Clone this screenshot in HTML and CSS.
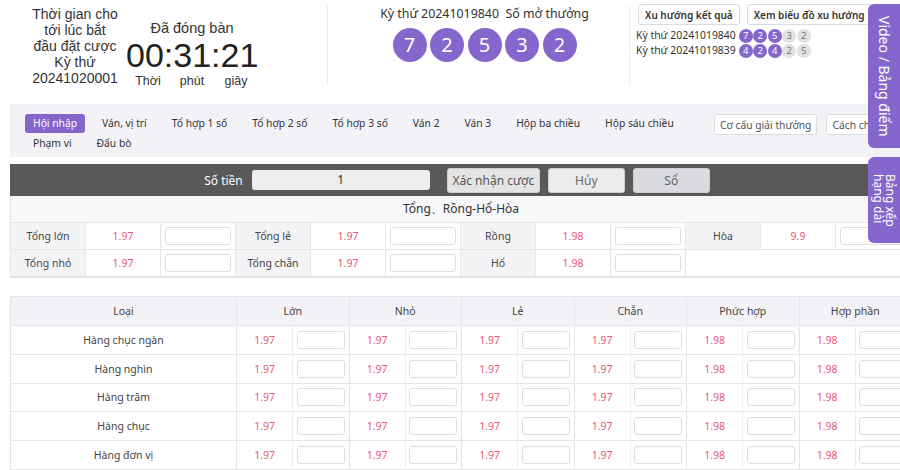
FILE: index.html
```html
<!DOCTYPE html>
<html lang="vi">
<head>
<meta charset="utf-8">
<title>Bet</title>
<link rel="stylesheet" href="styles.css">
</head>
<body>
<div class="page">
  <header class="hdr">
    <div class="hdr-left">
      <div class="countdown-label">Thời gian cho<br>tới lúc bắt<br>đầu đặt cược<br>Kỳ thứ<br>20241020001</div>
      <div class="clock">
        <div class="clock-status">Đã đóng bàn</div>
        <div class="clock-time">00:31:21</div>
        <div class="clock-units"><span>Thời</span><span>phút</span><span>giây</span></div>
      </div>
    </div>
    <div class="hdr-mid">
      <div class="draw-title">Kỳ thứ 20241019840&nbsp; Số mở thưởng</div>
      <div class="balls">
        <span class="ball">7</span><span class="ball">2</span><span class="ball">5</span><span class="ball">3</span><span class="ball">2</span>
      </div>
    </div>
    <div class="hdr-right">
      <div class="trend-btns">
        <button class="trend-btn">Xu hướng kết quả</button>
        <button class="trend-btn">Xem biểu đồ xu hướng</button>
      </div>
      <div class="hist-row">Kỳ thứ 20241019840
        <span class="mini on">7</span><span class="mini on">2</span><span class="mini on">5</span><span class="mini">3</span><span class="mini">2</span>
      </div>
      <div class="hist-row">Kỳ thứ 20241019839
        <span class="mini on">4</span><span class="mini on">2</span><span class="mini on">4</span><span class="mini">2</span><span class="mini">5</span>
      </div>
    </div>
  </header>

  <nav class="nav">
    <div class="tabs">
      <span class="tab active">Hội nhập</span>
      <span class="tab">Ván, vị trí</span>
      <span class="tab">Tổ hợp 1 số</span>
      <span class="tab">Tổ hợp 2 số</span>
      <span class="tab">Tổ hợp 3 số</span>
      <span class="tab">Ván 2</span>
      <span class="tab">Ván 3</span>
      <span class="tab">Hộp ba chiều</span>
      <span class="tab">Hộp sáu chiều</span>
      <span class="tab">Phạm vi</span>
      <span class="tab">Đấu bò</span>
    </div>
    <button class="nav-btn">Cơ cấu giải thưởng</button>
    <button class="nav-btn">Cách chơi</button>
  </nav>

  <div class="betbar">
    <span class="bet-label">Số tiền</span>
    <span class="bet-input">1</span>
    <button class="bar-btn confirm">Xác nhận cược</button>
    <button class="bar-btn">Hủy</button>
    <button class="bar-btn book">Sổ</button>
  </div>

  <section class="sec1">
    <div class="sec-title">Tổng、Rồng-Hổ-Hòa</div>
    <div class="grid12">
      <div class="lbl">Tổng lớn</div><div class="odd">1.97</div><div class="inp"><i></i></div>
      <div class="lbl">Tổng lẻ</div><div class="odd">1.97</div><div class="inp"><i></i></div>
      <div class="lbl">Rồng</div><div class="odd">1.98</div><div class="inp"><i></i></div>
      <div class="lbl">Hòa</div><div class="odd">9.9</div><div class="inp"><i></i></div>
      <div class="lbl">Tổng nhỏ</div><div class="odd">1.97</div><div class="inp"><i></i></div>
      <div class="lbl">Tổng chẵn</div><div class="odd">1.97</div><div class="inp"><i></i></div>
      <div class="lbl">Hổ</div><div class="odd">1.98</div><div class="inp"><i></i></div>
      <div class="blank"></div>
    </div>
  </section>

  <section class="sec2">
    <div class="grid13">
      <div class="th">Loại</div><div class="th span2">Lớn</div><div class="th span2">Nhỏ</div><div class="th span2">Lẻ</div><div class="th span2">Chẵn</div><div class="th span2">Phức hợp</div><div class="th span2">Hợp phần</div>

      <div class="rl">Hàng chục ngàn</div>
      <div class="odd">1.97</div><div class="inp"><i></i></div><div class="odd">1.97</div><div class="inp"><i></i></div><div class="odd">1.97</div><div class="inp"><i></i></div><div class="odd">1.97</div><div class="inp"><i></i></div><div class="odd">1.98</div><div class="inp"><i></i></div><div class="odd">1.98</div><div class="inp"><i></i></div>

      <div class="rl">Hàng nghìn</div>
      <div class="odd">1.97</div><div class="inp"><i></i></div><div class="odd">1.97</div><div class="inp"><i></i></div><div class="odd">1.97</div><div class="inp"><i></i></div><div class="odd">1.97</div><div class="inp"><i></i></div><div class="odd">1.98</div><div class="inp"><i></i></div><div class="odd">1.98</div><div class="inp"><i></i></div>

      <div class="rl">Hàng trăm</div>
      <div class="odd">1.97</div><div class="inp"><i></i></div><div class="odd">1.97</div><div class="inp"><i></i></div><div class="odd">1.97</div><div class="inp"><i></i></div><div class="odd">1.97</div><div class="inp"><i></i></div><div class="odd">1.98</div><div class="inp"><i></i></div><div class="odd">1.98</div><div class="inp"><i></i></div>

      <div class="rl">Hàng chục</div>
      <div class="odd">1.97</div><div class="inp"><i></i></div><div class="odd">1.97</div><div class="inp"><i></i></div><div class="odd">1.97</div><div class="inp"><i></i></div><div class="odd">1.97</div><div class="inp"><i></i></div><div class="odd">1.98</div><div class="inp"><i></i></div><div class="odd">1.98</div><div class="inp"><i></i></div>

      <div class="rl">Hàng đơn vị</div>
      <div class="odd">1.97</div><div class="inp"><i></i></div><div class="odd">1.97</div><div class="inp"><i></i></div><div class="odd">1.97</div><div class="inp"><i></i></div><div class="odd">1.97</div><div class="inp"><i></i></div><div class="odd">1.98</div><div class="inp"><i></i></div><div class="odd">1.98</div><div class="inp"><i></i></div>
    </div>
  </section>
</div>

<div class="side-tab video">Video / Bảng điểm</div>
<div class="side-tab rank">Bảng xếp hạng dài</div>
</body>
</html>
```

FILE: styles.css
```css
html, body {
  margin: 0;
  padding: 0;
  overflow: hidden;
  background: #fff;
}
body {
  font-family: "Noto Sans", "Open Sans", sans-serif;
  color: #333;
  width: 900px;
  height: 470px;
}
button {
  font-family: inherit;
  cursor: pointer;
}
.page {
  margin-left: 10px;
  width: 902px;
}

/* header */
.hdr {
  display: flex;
  height: 104px;
  margin-left: -10px;
}
.hdr-left {
  width: 327px;
  display: flex;
  flex: none;
}
.countdown-label {
  margin-left: 28px;
  width: 94px;
  padding-top: 6px;
  text-align: center;
  font-family: "Liberation Sans", Arial, sans-serif;
  font-size: 14px;
  line-height: 16px;
  color: #333;
}
.clock {
  margin-left: 4px;
  width: 132px;
  text-align: center;
  padding-top: 20px;
  font-family: "Liberation Sans", Arial, sans-serif;
}
.clock-status {
  font-size: 14.5px;
  line-height: 16px;
}
.clock-time {
  font-size: 34px;
  line-height: 38px;
  color: #222;
}
.clock-units {
  display: grid;
  grid-template-columns: repeat(3, 1fr);
  font-size: 12.5px;
  line-height: 14px;
  margin-top: 0;
}
.hdr-mid {
  width: 289px;
  flex: none;
  border-left: 1px solid #ececec;
  height: 80px;
  margin-top: 5px;
  padding-left: 12px;
  display: flex;
  flex-direction: column;
  align-items: center;
}
.draw-title {
  font-size: 12.4px;
  line-height: 16px;
  margin-top: 1px;
  color: #333;
}
.balls {
  display: flex;
  gap: 3.5px;
  margin-top: 6px;
}
.ball {
  width: 34px;
  height: 34px;
  border-radius: 50%;
  background: #8466cc;
  color: #fff;
  font-size: 20px;
  line-height: 34px;
  text-align: center;
}
.hdr-right {
  flex: 1;
  border-left: 1px solid #ececec;
  height: 80px;
  margin-top: 5px;
  padding-left: 6px;
}
.trend-btns {
  display: flex;
  gap: 7px;
  margin-top: -1px;
  margin-left: 2px;
}
.trend-btn {
  height: 21px;
  padding: 0 6px;
  border: 1px solid #dcdcdc;
  border-radius: 3px;
  background: #fff;
  color: #333;
  font-size: 10px;
  font-weight: 600;
  white-space: nowrap;
}
.hist-row {
  font-size: 10.4px;
  line-height: 15px;
  display: flex;
  align-items: center;
  white-space: nowrap;
  color: #333;
}
.trend-btns + .hist-row {
  margin-top: 3px;
}
.hist-row .mini:first-of-type {
  margin-left: 3px;
}
.mini {
  width: 14px;
  height: 14px;
  border-radius: 50%;
  background: #e2e2e2;
  color: #777;
  font-size: 9.5px;
  line-height: 14px;
  text-align: center;
  margin-right: 0.5px;
}
.mini.on {
  background: #8466cc;
  color: #fff;
}

/* nav */
.nav {
  display: flex;
  align-items: flex-start;
  background: #f3f2f7;
  height: 53px;
  box-sizing: border-box;
  padding: 10px 0 0 15px;
}
.tabs {
  width: 680px;
  flex: none;
  display: flex;
  flex-wrap: wrap;
  column-gap: 9px;
  row-gap: 1px;
}
.tab {
  font-size: 10.3px;
  line-height: 19px;
  padding: 0 8px;
  border-radius: 3px;
  color: #333;
  white-space: nowrap;
}
.tab.active {
  background: #8466cc;
  color: #fff;
}
.nav-btn {
  margin-left: 9px;
  height: 21px;
  padding: 0 5px;
  border: 1px solid #dcdcdc;
  border-radius: 3px;
  background: #fff;
  color: #555;
  font-size: 10.3px;
  white-space: nowrap;
}

/* bet bar */
.betbar {
  margin-top: 7px;
  height: 32px;
  background: #595959;
  display: flex;
  align-items: center;
  justify-content: center;
  padding-right: 8px;
}
.bet-label {
  color: #fff;
  font-size: 12px;
  margin-right: 9px;
}
.bet-input {
  width: 178px;
  height: 20px;
  background: #eeeeee;
  border-radius: 3px;
  text-align: center;
  font-size: 12px;
  line-height: 20px;
  color: #333;
  margin-right: 17px;
}
.bar-btn {
  height: 25px;
  width: 77px;
  border: 1px solid #cfcfcf;
  border-radius: 3px;
  background: #ececec;
  color: #666;
  font-size: 12px;
  margin-right: 8px;
  padding: 0;
}
.bar-btn.confirm {
  width: 93px;
  background: #e4e4e4;
  color: #555;
}
.bar-btn.book {
  background: #dadbe0;
  margin-right: 0;
}

/* section 1 */
.sec1 {
  border: 1px solid #e3e3e8;
  border-top: none;
  width: 900px;
}
.sec-title {
  height: 26px;
  line-height: 26px;
  text-align: center;
  font-size: 12px;
  background: #f8f8fb;
  border-bottom: 1px solid #e3e3e8;
  color: #333;
}
.grid12 {
  display: grid;
  grid-template-columns: repeat(12, 75px);
  grid-auto-rows: 27px;
}
.grid12 > div {
  border-right: 1px solid #e6e6ea;
  border-bottom: 1px solid #e6e6ea;
  box-sizing: border-box;
  display: flex;
  align-items: center;
  justify-content: center;
  font-size: 10.5px;
}
.lbl {
  background: #f4f4f7;
  color: #444;
}
.odd {
  color: #e8587c;
  font-size: 10.5px;
}
.inp i {
  display: block;
  width: 66px;
  height: 18px;
  border: 1px solid #dedede;
  border-radius: 3px;
  box-sizing: border-box;
  background: #fff;
}
.grid12 > .blank {
  grid-column: span 3;
  border-right: none;
}

/* section 2 */
.sec2 {
  margin-top: 18px;
  border: 1px solid #e3e3e8;
  width: 905px;
}
.grid13 {
  display: grid;
  grid-template-columns: 226px repeat(12, 56.25px);
  grid-template-rows: 29px;
  grid-auto-rows: 28.75px;
}
.grid13 > div {
  border-right: 1px solid #e6e6ea;
  border-bottom: 1px solid #e6e6ea;
  box-sizing: border-box;
  display: flex;
  align-items: center;
  justify-content: center;
  font-size: 10.5px;
}
.th {
  background: #f3f3f7;
  color: #444;
}
.span2 {
  grid-column: span 2;
}
.rl {
  color: #444;
}
.grid13 .inp i {
  width: 48px;
  height: 18px;
}
.grid13 > .odd {
  border-right-color: #efeff2;
}

/* side tabs */
.side-tab {
  position: fixed;
  right: 0;
  width: 32px;
  background: #8466cc;
  color: #fff;
  border-radius: 6px 0 0 6px;
  writing-mode: vertical-rl;
  box-sizing: border-box;
}
.side-tab.video {
  top: 4px;
  height: 144px;
  font-size: 14px;
  line-height: 32px;
  padding-top: 12px;
}
.side-tab.rank {
  top: 157px;
  height: 86px;
  font-size: 12px;
  line-height: 12px;
  padding: 17px 4px 0 0;
  text-align: left;
}
```
